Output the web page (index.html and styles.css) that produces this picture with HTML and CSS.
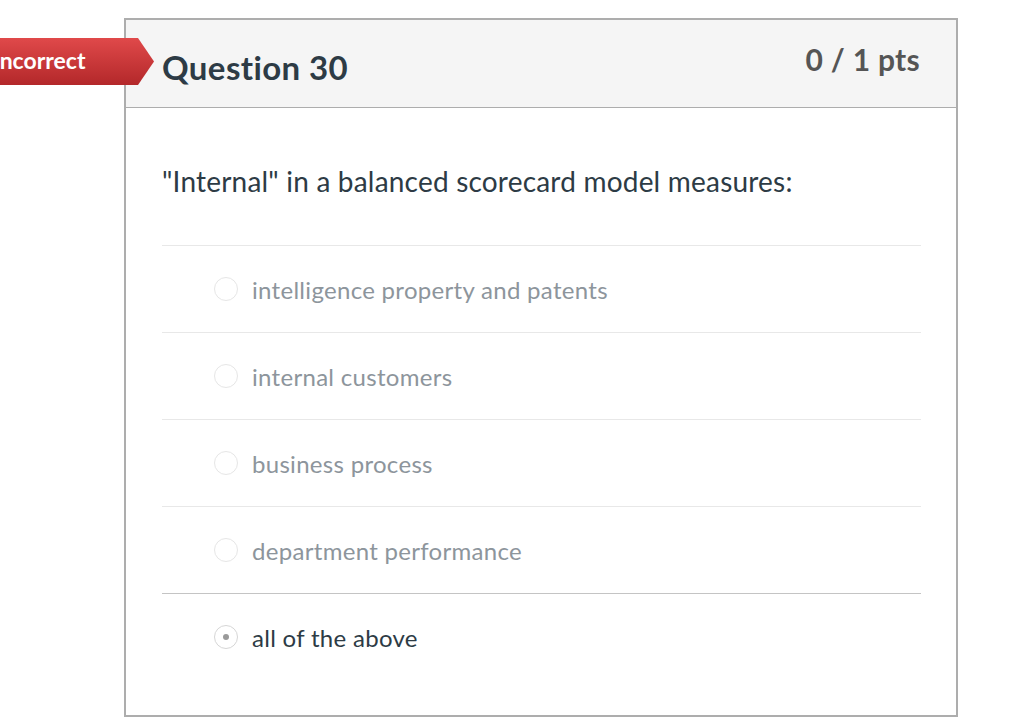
FILE: index.html
```html
<!DOCTYPE html>
<html>
<head>
    <meta charset="UTF-8">
    <title>Question 30</title>
    <link rel="stylesheet" href="styles.css">
</head>
<body>
    <div class="question">
        <div class="answer-flag">Incorrect</div>
        <div class="question-header">
            <h2 class="question-title">Question 30</h2>
            <span class="question-points">0 / 1 pts</span>
        </div>
        <div class="question-body">
            <p class="question-text">"Internal" in a balanced scorecard model measures:</p>
            <div class="answers">
                <div class="answer">
                    <span class="radio"></span>
                    <span class="answer-label">intelligence property and patents</span>
                </div>
                <div class="answer">
                    <span class="radio"></span>
                    <span class="answer-label">internal customers</span>
                </div>
                <div class="answer">
                    <span class="radio"></span>
                    <span class="answer-label">business process</span>
                </div>
                <div class="answer">
                    <span class="radio"></span>
                    <span class="answer-label">department performance</span>
                </div>
                <div class="answer selected">
                    <span class="radio checked"></span>
                    <span class="answer-label">all of the above</span>
                </div>
            </div>
        </div>
    </div>
</body>
</html>
```

FILE: styles.css
```css
body {
    background-color: #ffffff;
    color: #2d3b45;
    font-family: Lato, "Liberation Sans", sans-serif;
    margin: 0;
    padding: 18px 0 0 124px;
}

.question {
    position: relative;
    width: 830px;
    border: 2px solid #adadad;
}

.answer-flag {
    position: absolute;
    top: 18px;
    left: -140px;
    width: 168px;
    height: 47px;
    padding-left: 7px;
    box-sizing: border-box;
    line-height: 45px;
    color: #ffffff;
    font-size: 23px;
    font-weight: bold;
    background: linear-gradient(#e0494a, #b3282a);
    clip-path: polygon(0 0, 152px 0, 168px 50%, 152px 100%, 0 100%);
}

.question-header {
    display: flex;
    justify-content: space-between;
    align-items: flex-start;
    height: 87px;
    padding: 0 36px;
    background-color: #f5f5f5;
    border-bottom: 1px solid #adadad;
}

.question-title {
    margin: 27px 0 0 0;
    font-size: 33px;
    font-weight: bold;
    letter-spacing: 0.4px;
    color: #2d3b45;
}

.question-points {
    margin-top: 21px;
    font-size: 30px;
    font-weight: bold;
    letter-spacing: 0.3px;
    color: #555555;
}

.question-body {
    padding: 0 35px 35px 36px;
}

.question-text {
    margin: 0;
    padding: 56px 0 47px 0;
    font-size: 28px;
    line-height: 34px;
    letter-spacing: 0.2px;
}

.answer {
    display: flex;
    align-items: center;
    gap: 14px;
    height: 86px;
    padding-left: 52px;
    border-top: 1px solid #e8e8e8;
}

.answer.selected {
    border-top-color: #c4c4c4;
}

.answer-label {
    font-size: 24px;
    letter-spacing: 0.3px;
    color: #8d959c;
}

.answer.selected .answer-label {
    color: #2d3b45;
}

.radio {
    position: relative;
    width: 22px;
    height: 22px;
    border: 1px solid #e6e6e6;
    border-radius: 50%;
    background-color: #ffffff;
}

.radio.checked {
    border-color: #d6d6d6;
}

.radio.checked::after {
    content: "";
    position: absolute;
    top: 8px;
    left: 8px;
    width: 6px;
    height: 6px;
    border-radius: 50%;
    background-color: #9a9a9a;
}
```
